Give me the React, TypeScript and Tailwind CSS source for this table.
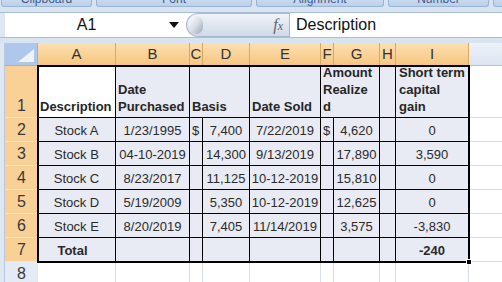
import React from 'react';

// 열 정의
const columns = ['A', 'B', 'C', 'D', 'E', 'F', 'G', 'H', 'I'];

// 데이터 행
const stockRows: string[][] = [
  ['Stock A', '1/23/1995', '$', '7,400', '7/22/2019', '$', '4,620', '', '0'],
  ['Stock B', '04-10-2019', '', '14,300', '9/13/2019', '', '17,890', '', '3,590'],
  ['Stock C', '8/23/2017', '', '11,125', '10-12-2019', '', '15,810', '', '0'],
  ['Stock D', '5/19/2009', '', '5,350', '10-12-2019', '', '12,625', '', '0'],
  ['Stock E', '8/20/2019', '', '7,405', '11/14/2019', '', '3,575', '', '-3,830'],
];

const tabs = [
  { label: 'Clipboard', w: 'w-[91px]' },
  { label: 'Font', w: 'w-[156px]' },
  { label: 'Alignment', w: 'w-[128px]' },
  { label: 'Number', w: 'w-[101px]' },
  { label: '', w: 'w-[20px]' },
];

const RowHead = ({ n, active = true }: { n: number; active?: boolean }) => (
  <div
    className={`flex items-end justify-center pb-[2px] text-[16px] leading-[18px] text-[#3a3a3a] border-b ${
      active ? 'bg-[#f9d197] border-[#fbe4bf]' : 'bg-[#e4ebf5] border-[#c5d1e2]'
    }`}
  >
    {n}
  </div>
);

const Cell = ({ children, className = '' }: { children?: React.ReactNode; className?: string }) => (
  <div className={`flex items-end justify-center pb-[3px] border-r border-b border-black bg-[#e8eaf4] text-[13px] leading-[15px] text-[#2b2b2b] whitespace-nowrap ${className}`}>
    {children}
  </div>
);

const Blank = () => <div className="border-b border-[#d8dfea] bg-white" />;

export default function App() {
  return (
    <div className="w-[502px] h-[282px] overflow-hidden bg-[#d9e4f2] font-['Liberation_Sans',Arial,sans-serif]">
      {/* 리본 탭 */}
      <div className="flex h-[8px] gap-[4px] pl-[1px]">
        {tabs.map((t, i) => (
          <div
            key={i}
            className={`${t.w} shrink-0 h-[7px] overflow-hidden rounded-b-[3px] border border-t-0 border-[#9cb4d4] bg-gradient-to-b from-[#c9daf0] to-[#bcd0ea] text-center`}
          >
            <div className="-mt-[8px] text-[12px] leading-[14px] text-[#3d5c8c]">{t.label}</div>
          </div>
        ))}
      </div>

      {/* 수식 입력줄 */}
      <div className="mt-[4px] flex h-[26px] border-t border-b border-[#a9bdd7] bg-white">
        <div className="w-[5px] bg-[#dfe7f2]" />
        <div className="relative flex w-[181px] items-center justify-center text-[16px] text-[#111]">
          <span className="-ml-[18px]">A1</span>
          <svg className="absolute right-[7px] top-[9px]" width="10" height="6" viewBox="0 0 10 6">
            <polygon points="0,0 10,0 5,6" fill="#111" />
          </svg>
        </div>
        <div className="flex w-[103px] items-center justify-between rounded-l-full border border-r-0 border-[#a7b9d1] bg-gradient-to-b from-[#f1f4f9] to-[#cfd9e7]">
          <div className="ml-[2px] h-[18px] w-[14px] rounded-full bg-gradient-to-br from-[#ffffff] via-[#d9dee6] to-[#9aa6b6]" />
          <span className="mr-[6px] font-['Liberation_Serif',serif] text-[16px] italic text-[#5a6472]">
            f<span className="text-[12px]">x</span>
          </span>
        </div>
        <div className="flex flex-1 items-center border-l border-[#a7b9d1] pl-[6px] text-[16px] text-[#111]">
          Description
        </div>
      </div>

      {/* 시트 */}
      <div className="mt-[5px] flex">
        <div className="w-[5px] bg-[#dfe7f2] border-r border-[#b9c8dc]" />
        <div className="relative grid flex-1 grid-cols-[33px_78px_74px_13px_47px_71px_13px_46px_16px_73px_1fr] grid-rows-[23px_52px_repeat(6,24px)_24px]">
          {/* 헤더 행 */}
          <div className="border-b border-r border-[#9fb3cf] bg-[#aec7ea] relative">
            <svg className="absolute right-[3px] bottom-[3px]" width="16" height="13" viewBox="0 0 16 13">
              <polygon points="16,0 16,13 0,13" fill="#eef3fa" />
            </svg>
          </div>
          {columns.map((c) => (
            <div
              key={c}
              className="flex items-center justify-center border-r border-b border-[#dba860] bg-gradient-to-b from-[#fce0b2] to-[#f6c680] text-[15px] text-[#333]"
            >
              {c}
            </div>
          ))}
          <div className="border-b border-[#b4c3d8] bg-gradient-to-b from-[#edf2f9] to-[#dce5f1]" />

          {/* 1행: 제목 */}
          <RowHead n={1} />
          <div className="flex items-end pl-[2px] pb-[2px] border-r border-b border-black bg-white text-[13px] leading-[17px] font-bold text-[#262626]">
            Description
          </div>
          <div className="flex items-end pl-[2px] pb-[2px] border-r border-b border-black bg-[#e8eaf4] text-[13px] leading-[17px] font-bold text-[#262626]">
            <div>
              Date
              <br />
              Purchased
            </div>
          </div>
          <div className="relative z-10 flex items-end pl-[2px] pb-[2px] border-b border-black bg-[#e8eaf4] text-[13px] leading-[17px] font-bold text-[#262626] whitespace-nowrap overflow-visible">
            Basis
          </div>
          <div className="border-r border-b border-black bg-[#e8eaf4]" />
          <div className="flex items-end pl-[2px] pb-[2px] border-r border-b border-black bg-[#e8eaf4] text-[13px] leading-[17px] font-bold text-[#262626] whitespace-nowrap">
            Date Sold
          </div>
          <div className="col-span-2 flex items-end pl-[2px] pb-[2px] border-r border-b border-black bg-[#e8eaf4] text-[13px] leading-[17px] font-bold text-[#262626]">
            <div>
              Amount
              <br />
              Realize
              <br />d
            </div>
          </div>
          <div className="border-r border-b border-black bg-[#e8eaf4]" />
          <div className="flex items-end pl-[3px] pb-[2px] border-r border-b border-black bg-[#e8eaf4] text-[13px] leading-[17px] font-bold text-[#262626] whitespace-nowrap">
            <div>
              Short term
              <br />
              capital
              <br />
              gain
            </div>
          </div>
          <Blank />

          {/* 데이터 행 */}
          {stockRows.map((row, r) => (
            <React.Fragment key={r}>
              <RowHead n={r + 2} />
              {row.map((v, c) => (
                <Cell key={c} className={c === 2 || c === 5 ? 'justify-start pl-[2px]' : ''}>
                  {v}
                </Cell>
              ))}
              <Blank />
            </React.Fragment>
          ))}

          {/* 합계 행 */}
          <RowHead n={7} />
          <Cell className="font-bold pr-[8px]">Total</Cell>
          <Cell />
          <Cell />
          <Cell />
          <Cell />
          <Cell />
          <Cell />
          <Cell />
          <Cell className="font-bold">-240</Cell>
          <Blank />

          {/* 8행 */}
          <RowHead n={8} active={false} />
          {columns.map((c) => (
            <div key={c} className="border-r border-[#d8dfea] bg-white" />
          ))}
          <div className="bg-white" />

          {/* 선택 영역 테두리 */}
          <div className="pointer-events-none absolute -inset-px z-20 col-start-2 col-end-11 row-start-2 row-end-9 border-2 border-black">
            <div className="absolute -right-[4px] -bottom-[4px] h-[6px] w-[6px] border border-white bg-black" />
          </div>
        </div>
      </div>
    </div>
  );
}
